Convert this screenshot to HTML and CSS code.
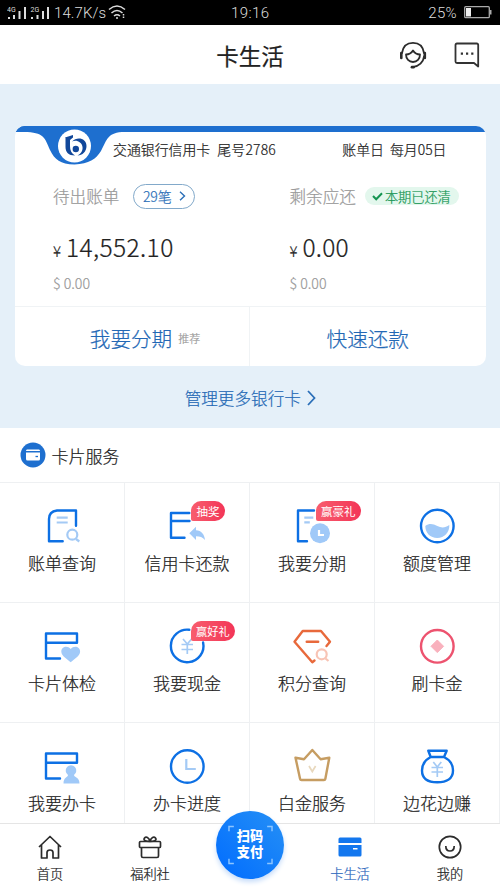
FILE: index.html
```html
<!DOCTYPE html>
<html lang="zh-CN">
<head>
<meta charset="utf-8">
<title>卡生活</title>
<link rel="stylesheet" href="styles.css">
</head>
<body>
<div class="status">
  <svg class="signal" width="48" height="25" viewBox="0 0 48 25" fill="#ddd">
    <path d="M1 16h2v2H1zM6 14h2v4H6zM11.500 10h2v8h-2zM17 6h2v12h-2zM24 16h2v2h-2zM29.500 14h2v4h-2zM35 10h2v8h-2zM40 6h2v12h-2z"/>
    <text class="net" x="0" y="11">4G</text><text class="net" x="23.500" y="11">2G</text>
  </svg>
  <span class="speed">14.7K/s</span>
  <svg class="wifi" width="18" height="16" viewBox="0 0 18 16" fill="none" stroke="#ddd" stroke-width="1.500">
    <path d="M1 5.500q8-7 16 0M3.500 9q5.500-5 11 0M6 12q3-2.500 6 0"/><circle cx="9" cy="14" r="1" fill="#ddd" stroke="none"/><path d="M15.500 10v4" stroke-dasharray="1.500 1"/>
  </svg>
  <span class="time">19:16</span>
  <span class="percent">25%</span>
  <svg class="battery" width="28" height="13" viewBox="0 0 28 13"><rect x=".7" y=".7" width="24.600" height="11" rx="1" fill="none" stroke="#aaa" stroke-width="1.300"/><path d="M2 2h5v8.500H2z" fill="#eee"/><path d="M26 4h1.500v4.500H26z" fill="#aaa"/></svg>
</div>

<header class="header">
  <h1>卡生活</h1>
  <div class="tools">
    <svg width="28" height="28" viewBox="0 0 28 28" fill="none" stroke="#2c2c2c" stroke-width="1.800" stroke-linecap="round" stroke-linejoin="round"><path d="M3 12C4 5 8.500 1.800 14 1.800S24 5 25 12M25 15.500C24.500 21 20 25.300 13.500 26.200"/><path d="M2.300 12v5M25.800 12v5" stroke-width="2.600"/><path d="M13 26.200h1.500" stroke-width="2.800"/><path d="M7 13.500q4.500 0 7-4 2.500 4 7 4c0 4.500-3 7.500-7 7.500s-7-3-7-7.500z"/></svg>
    <svg width="26" height="27" viewBox="0 0 26 27" fill="none" stroke="#333" stroke-width="1.800" stroke-linejoin="round"><path d="M24.200 25.500V4q0-1.500-1.500-1.500H3Q1.500 2.500 1.500 4v16.500Q1.500 22 3 22h17z"/><path d="M6.800 11.500h2.200v2.200H6.800zM12 11.500h2.200v2.200H12zM17.200 11.500h2.200v2.200h-2.200z" fill="#333" stroke="none"/></svg>
  </div>
</header>

<section class="hero">
  <article class="card">
    <svg class="crest" width="110" height="40" viewBox="0 0 110 40"><path d="M0 0h110v6C92 6 92 14 86 25 81 33 74 38 59.500 38.500 45 38 40 34 35 24 30 12 29 6 9 6H0z" fill="#1e6fcf"/><circle cx="59.500" cy="20" r="16.500" fill="#fff"/><path d="M50 11.500l8-2.500v2.500l-3 2.500v6c0 4.500 1.500 7.500 5 9.500-6.500 0-9.500-3.500-9.500-8.500v-9z" fill="#11479a"/><path d="M57 15.500c5-5.500 14.500-3.500 14.500 4.500 0 5.500-4 9.500-9 9.500 3.500-1.500 5.500-5 5-8.500-.7-5-6-7.500-10.500-5.500z" fill="#11479a"/><circle cx="60.800" cy="23" r="3.200" fill="#11479a"/></svg>
    <div class="bank"><span>交通银行信用卡</span><span class="tail">尾号2786</span><span class="date">账单日</span><span class="day">每月05日</span></div>
    <div class="bills">
      <div class="bill">
        <div class="caption">待出账单<span class="count">29笔<svg width="7" height="10" viewBox="0 0 7 10" fill="none" stroke="#2b6fb8" stroke-width="1.400"><path d="M1 .8l4.500 4.200L1 9.200"/></svg></span></div>
        <div class="amount long"><small>¥</small>14,552.10</div>
        <div class="usd">$ 0.00</div>
      </div>
      <div class="bill">
        <div class="caption">剩余应还<span class="paid"><svg width="11" height="9" viewBox="0 0 11 9" fill="none" stroke="#159552" stroke-width="2"><path d="M1 4l3.200 3.300L10 1.200"/></svg>本期已还清</span></div>
        <div class="amount"><small>¥</small>0.00</div>
        <div class="usd">$ 0.00</div>
      </div>
    </div>
    <div class="actions"><div class="action first">我要分期<small>推荐</small></div><div class="action">快速还款</div></div>
  </article>
  <div class="more">管理更多银行卡<svg width="9" height="16" viewBox="0 0 9 16" fill="none" stroke="#2b6fb8" stroke-width="1.800"><path d="M1 1l6.500 7L1 15"/></svg></div>
</section>

<h2 class="section"><svg width="26" height="26" viewBox="0 0 26 26"><circle cx="13" cy="13" r="12.500" fill="#1e6fcf"/><path d="M7 7.500h12q1 0 1 1.500H6Q6 7.500 7 7.500zM6 10.500h14v6.500q0 1.500-1.500 1.500h-11Q6 18.500 6 17z" fill="#fff"/><path d="M15.500 14.500h2.500" stroke="#1e6fcf" stroke-width="1.300"/></svg>卡片服务</h2>

<main class="grid">
  <div class="cell"><svg class="icon" viewBox="0 0 48 48"><path class="blue" d="M38 23.700V8.500H19Q11 9.500 11 17v22.300h13.700"/><path class="pale" d="M18.700 15.700h11M18.700 20.500h11"/><circle class="pale" cx="34.300" cy="32.700" r="5"/><path class="pale" d="M38 37l3.300 2.500"/></svg>账单查询</div>
  <div class="cell"><svg class="icon" viewBox="0 0 48 48"><path class="blue" d="M26.300 11H8v24.700h13.500M8 19h18.500"/><path class="soft" d="M26.300 31.300L33 24.700v3.500c5.500.3 8.500 4.200 9 9.800-2.500-3-5-3.800-9-3.800V38z"/></svg>信用卡还款<span class="badge">抽奖</span></div>
  <div class="cell"><svg class="icon" viewBox="0 0 48 48"><path class="blue" d="M26 8.500H10v30.800h9"/><path class="pale" d="M16.300 15.700h9M16.300 20.300h5.500"/><circle class="soft" cx="32" cy="31.300" r="10"/><path d="M31 28v5h5" fill="none" stroke="#fff" stroke-width="2.200"/></svg>我要分期<span class="badge wide">赢豪礼</span></div>
  <div class="cell"><svg class="icon" viewBox="0 0 48 48"><circle class="blue" cx="24.300" cy="24" r="16.300"/><path class="soft" d="M12.300 24c4-3 8-2 12 0s8 2 12-1c.5 7-5 13-12 13s-12-5-12-12z"/></svg>额度管理</div>
  <div class="cell"><svg class="icon" viewBox="0 0 48 48"><path class="blue" d="M22 36.500H8v-25h31v9.300H8"/><path class="soft" d="M32.700 40.300c-3-3-9.400-6-9.400-10.800 0-5 6.200-6.500 9.400-2.500 3.200-4 9.400-2.500 9.400 2.500 0 4.800-6.400 7.800-9.400 10.800z"/></svg>卡片体检</div>
  <div class="cell"><svg class="icon" viewBox="0 0 48 48"><path class="blue" d="M26.300 7.800A16.300 16.300 0 1 0 40.100 20.500"/><path class="pale thin" d="M20 17l4.300 5 4.300-5M18.500 22.500h11.500M18.500 27.500h11.500M24.300 22v10"/></svg>我要现金<span class="badge late">赢好礼</span></div>
  <div class="cell"><svg class="icon" viewBox="0 0 48 48"><path class="blue orange" d="M26.500 38.500l-2.200 1.800L6.500 19.700 14.700 9H33l9 10.700-3.500 4.300M18.700 19.700h11.500"/><circle class="pale peach" cx="33.700" cy="32.300" r="5"/><path class="pale peach" d="M37.500 36.500l3 2.500"/></svg>积分查询</div>
  <div class="cell"><svg class="icon" viewBox="0 0 48 48"><circle class="blue rose" cx="24.300" cy="24.300" r="16.300"/><path d="M24.300 18l6.300 6.300-6.300 6.300-6.300-6.300z" fill="#f9b1bd" stroke="#f9b1bd" stroke-linejoin="round"/></svg>刷卡金</div>
  <div class="cell"><svg class="icon" viewBox="0 0 48 48"><path class="blue" d="M22 36.500H8v-25h31v9.300H8"/><path class="soft" d="M30 33a5.300 5.300 0 1 1 6 0c0 2.500 5.500 2 5.500 8.500h-16C25.500 35 30 35.500 30 33z"/></svg>我要办卡</div>
  <div class="cell"><svg class="icon" viewBox="0 0 48 48"><circle class="blue" cx="24.300" cy="24.500" r="16.300"/><path class="pale" d="M23.300 17v10h9.500"/></svg>办卡进度</div>
  <div class="cell"><svg class="icon" viewBox="0 0 48 48"><path class="blue gold" d="M7.500 15.700l8.500 1.500 8.300-9.200 8.300 9.200 8.700-1.500-4 21.300q-.2 1-1.300 1H13.500q-1.200 0-1.400-1z"/><path class="pale sand" d="M21 24l3.300 5.500 3.300-5.500"/></svg>白金服务</div>
  <div class="cell"><svg class="icon" viewBox="0 0 48 48"><path class="blue" d="M15.300 8.700h18.400L31 15H17.700zM17.700 15C12 18 9 23 9 28.500 9 37 15 40.300 24.300 40.300S40 37 40 28.500C40 23 37 18 31 15"/><path class="pale thin" d="M20.300 20l4 5 4-5M18.500 25.500h11.500M18.500 30h11.500M24.300 25v10"/></svg>边花边赚</div>
</main>

<nav class="nav">
  <div class="tab"><svg viewBox="0 0 26 26"><path d="M2 13L13 2.500 24 13M4.500 11v13h5.500v-5.500q0-2.500 3-2.500t3 2.500V24h5.500V11"/></svg>首页</div>
  <div class="tab"><svg viewBox="0 0 26 26"><rect x="2.500" y="7.500" width="21" height="6" rx="1"/><path d="M4.500 13.500V22q0 1.500 1.500 1.500h14q1.500 0 1.500-1.500v-8.500M13 7.500C8 7.500 6 6 7.500 4 9 2.200 12 3 13 7.500 14 3 17 2.200 18.500 4 20 6 18 7.500 13 7.500"/></svg>福利社</div>
  <div class="tab scan"><div class="fab"><svg class="corners" viewBox="0 0 46 40"><path d="M1 6V1h5M40 1h5v5M1 34v5h5M40 39h5v-5"/></svg><span>扫码</span><span>支付</span></div></div>
  <div class="tab active"><svg viewBox="0 0 26 26"><path d="M3 3.500h20q1.500 0 1.500 1.500v4h-23V5Q1.500 3.500 3 3.500zM1.500 11h23v10q0 1.500-1.500 1.500H3Q1.500 22.500 1.500 21zM16 14v1.500h4.500V14z" fill="#1377ee" fill-rule="evenodd" stroke="none"/></svg>卡生活</div>
  <div class="tab"><svg viewBox="0 0 26 26"><circle cx="13" cy="13" r="10.700"/><path d="M8.800 12q0 5 4.200 5t4.200-5"/></svg>我的</div>
</nav>
</body>
</html>
```
FILE: styles.css
```css
* { box-sizing: border-box; }
body {
  margin: 0;
  width: 500px;
  height: 889px;
  overflow: hidden;
  display: flex;
  flex-direction: column;
  background: #fff;
  color: #222;
  font-family: "Noto Sans CJK SC", sans-serif;
  font-weight: 300;
  -webkit-text-stroke: .22px currentColor;
}
svg { display: block; flex: none; }
h1, h2 { margin: 0; font-weight: 400; }

.status {
  height: 25px;
  flex: none;
  display: flex;
  align-items: center;
  background: #000;
  color: #ddd;
  font: 300 15px/25px Roboto, sans-serif;
  padding: 2px 8px 0 7px;
  -webkit-text-stroke: 0;
}
.signal { margin-top: -1px; }
.net { font: 7px Roboto, sans-serif; }
.speed { width: 54px; margin-left: -1px; letter-spacing: .1px; }
.wifi { margin-top: -3px; }
.time { margin-left: 105px; letter-spacing: .4px; }
.percent { margin-left: auto; letter-spacing: .3px; }
.battery { margin: -2px 0 0 7px; }

.header {
  height: 59px;
  flex: none;
  display: grid;
  grid-template-columns: 1fr auto 1fr;
  align-items: center;
}
.header h1 {
  grid-column: 2;
  font-size: 22.500px;
  line-height: 30px;
  color: #222;
}
.tools { display: flex; justify-content: flex-end; align-items: center; gap: 27px; padding-right: 20px; }

.hero {
  height: 344px;
  flex: none;
  background: #e5f0f9;
  padding: 42px 14.500px 0 15px;
}
.card {
  height: 240px;
  position: relative;
  overflow: hidden;
  padding-top: 6px;
  border-radius: 10px;
  background: linear-gradient(#1e6fcf 6px, #fff 6px);
}
.crest { position: absolute; left: 0; top: 0; }
.bank {
  display: flex;
  height: 35px;
  padding-left: 98px;
  font-size: 13.900px;
  line-height: 35px;
  white-space: nowrap;
}
.tail { margin-left: 7px; letter-spacing: .2px; }
.date { margin-left: auto; }
.day { margin: 0 39px 0 6px; }
.bills { display: flex; height: 139px; padding: 16px 0 0 38px; }
.bill { flex: 0 0 236.500px; }
.caption {
  display: flex;
  align-items: center;
  height: 26px;
  color: #999;
  font-size: 16.600px;
  white-space: nowrap;
}
.count {
  display: flex;
  align-items: center;
  gap: 7px;
  height: 25px;
  margin-left: 14px;
  padding: 0 8.500px;
  border: 1px solid #82a9ca;
  border-radius: 13px;
  color: #2b6fb8;
  font-size: 14px;
}
.paid {
  display: flex;
  align-items: center;
  gap: 2px;
  height: 18px;
  margin-left: 9px;
  padding: 0 8px 0 7px;
  border-radius: 9px;
  background: #e3f7ed;
  color: #159552;
  font-size: 13.200px;
}
.amount {
  margin-top: 23px;
  font-size: 24.500px;
  line-height: 30px;
  letter-spacing: .2px;
}
.long { letter-spacing: .4px; }
.amount small { font-size: 15px; margin-right: 5px; letter-spacing: 0; }
.usd { margin-top: 7px; font-size: 14.200px; line-height: 20px; color: #999; }
.actions { display: flex; height: 60px; border-top: 1px solid #f0f3f5; }
.action {
  flex: 1;
  display: flex;
  align-items: center;
  justify-content: center;
  padding-top: 2px;
  color: #2368b5;
  font-size: 20.600px;
}
.first { flex: 0 0 235px; border-right: 1px solid #f0f3f5; padding-left: 26px; }
.first small { margin-left: 6px; color: #999; font-size: 11px; }
.more {
  display: flex;
  align-items: center;
  justify-content: center;
  gap: 6px;
  height: 64px;
  color: #2368b5;
  font-size: 16.600px;
}

.section {
  height: 54px;
  flex: none;
  display: flex;
  align-items: center;
  gap: 6px;
  padding-left: 19.500px;
  font-size: 17px;
  font-weight: 300;
}

.grid {
  height: 341px;
  flex: none;
  display: grid;
  grid-template-columns: repeat(4, 125px);
  grid-auto-rows: 120px;
  overflow: hidden;
}
.cell {
  position: relative;
  display: flex;
  flex-direction: column;
  align-items: center;
  border-top: 1px solid #eef0f2;
  border-right: 1px solid #eef0f2;
  padding-top: 19px;
  font-size: 17px;
  line-height: 24px;
}
.icon { width: 48px; height: 48px; margin-bottom: 1px; }
.blue { fill: none; stroke: #0d70e4; stroke-width: 2.400; stroke-linecap: round; stroke-linejoin: round; }
.pale { fill: none; stroke: #a4caf5; stroke-width: 2.200; }
.thin { stroke-width: 1.700; }
.soft { fill: #a0c9f8; }
.orange { stroke: #e8693b; }
.peach { stroke: #f8c4b5; }
.rose { stroke: #ed536f; }
.gold { stroke: #c69d62; }
.sand { stroke: #e8d8bd; stroke-width: 1.700; }
.badge {
  position: absolute;
  left: 66px;
  top: 18px;
  padding: 0 5.500px;
  border-radius: 10px 10px 10px 2px;
  background: linear-gradient(90deg, #f85d6e, #f33557);
  color: #fff;
  font-size: 11.500px;
  font-weight: 400;
  line-height: 20px;
  white-space: nowrap;
  -webkit-text-stroke: 0;
}
.wide { padding: 0 5px; }
.late { padding: 0 5px; font-size: 11.200px; }

.nav {
  height: 66px;
  flex: none;
  display: grid;
  grid-template-columns: repeat(5, 100px);
  background: #fff;
  border-top: 1px solid #e5e5e5;
  position: relative;
}
.tab {
  display: flex;
  flex-direction: column;
  align-items: center;
  padding-top: 10px;
  font-size: 13.200px;
  line-height: 20px;
}
.tab > svg { width: 26px; height: 26px; margin-bottom: 4px; fill: none; stroke: #2c2c2c; stroke-width: 1.700; stroke-linejoin: round; }
.active { color: #2e69bd; }
.scan { padding: 0; }
.fab {
  position: relative;
  display: flex;
  flex-direction: column;
  align-items: center;
  width: 68px;
  height: 68px;
  margin-top: -13px;
  padding-top: 18px;
  border-radius: 50%;
  background: linear-gradient(45deg, #006cff, #2690f5);
  box-shadow: 0 3px 5px #c7ddfa;
  color: #fff;
  font-family: "Liberation Sans", "Noto Sans CJK SC", sans-serif;
  font-size: 13.200px;
  font-weight: 900;
  line-height: 15.500px;
  -webkit-text-stroke: 0;
}
.fab span { display: block; height: 15.500px; }
.corners { position: absolute; left: 12px; top: 14px; width: 45px; height: 40px; fill: none; stroke: #8dc5ff; stroke-width: 1.500; }
```
